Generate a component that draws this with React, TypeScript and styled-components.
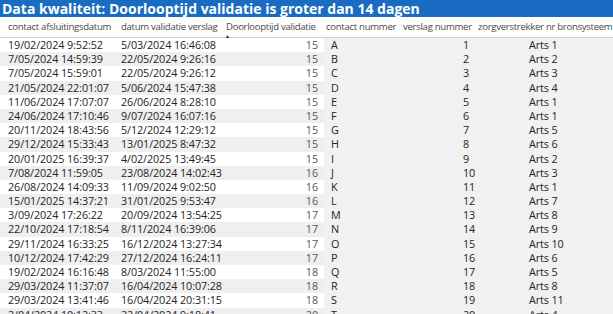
import React from "react";
import styled, { createGlobalStyle } from "styled-components";

const Global = createGlobalStyle`
  html, body {
    margin: 0;
    padding: 0;
    width: 613px;
    height: 314px;
    overflow: hidden;
    background: #ffffff;
    font-family: "Open Sans", "Noto Sans", Arial, sans-serif;
  }
`;

const Page = styled.div`
  width: 613px;
  height: 314px;
  overflow: hidden;
  display: flex;
  flex-direction: column;
`;

const TitleBar = styled.div`
  height: 17px;
  background: #1a6cc2;
  color: #ffffff;
  font-weight: 700;
  font-size: 14px;
  line-height: 17px;
  padding-left: 2px;
  white-space: nowrap;
`;

const COLS = "113px 109px 102px 74px 77px 1fr";

const HeaderRow = styled.div`
  display: grid;
  grid-template-columns: ${COLS};
  height: 23px;
  border-bottom: 1px solid #c9d3de;
  box-sizing: border-box;
`;

const HeaderCell = styled.div<{ $pl: number }>`
  position: relative;
  padding-left: ${(p) => p.$pl}px;
  font-size: 9.6px;
  letter-spacing: -0.3px;
  color: #4a4a4a;
  line-height: 20px;
  white-space: nowrap;
`;

const SortArrow = styled.span`
  position: absolute;
  left: 3px;
  top: 17px;
  font-size: 5px;
  line-height: 5px;
  color: #222;
`;

const Row = styled.div<{ $alt: boolean }>`
  display: grid;
  grid-template-columns: ${COLS};
  height: 14.2px;
  flex: none;
  background: ${(p) => (p.$alt ? "#efefef" : "#ffffff")};
`;

const Cell = styled.div<{ $pl?: number; $right?: boolean; $shade?: boolean; $muted?: boolean }>`
  padding-left: ${(p) => p.$pl ?? 0}px;
  padding-right: ${(p) => (p.$right ? 6 : 0)}px;
  text-align: ${(p) => (p.$right ? "right" : "left")};
  background: ${(p) => (p.$shade ? "#f1f1f1" : "transparent")};
  color: ${(p) => (p.$muted ? "#5e5454" : "#252423")};
  font-size: 10.8px;
  letter-spacing: -0.1px;
  line-height: 14.2px;
  white-space: nowrap;
  overflow: hidden;
`;

type R = [string, string, number, string, number, string];

const rows: R[] = [
  ["19/02/2024 9:52:52", "5/03/2024 16:46:08", 15, "A", 1, "Arts 1"],
  ["7/05/2024 14:59:39", "22/05/2024 9:26:16", 15, "B", 2, "Arts 2"],
  ["7/05/2024 15:59:01", "22/05/2024 9:26:12", 15, "C", 3, "Arts 3"],
  ["21/05/2024 22:01:07", "5/06/2024 15:47:38", 15, "D", 4, "Arts 4"],
  ["11/06/2024 17:07:07", "26/06/2024 8:28:10", 15, "E", 5, "Arts 1"],
  ["24/06/2024 17:10:46", "9/07/2024 16:07:16", 15, "F", 6, "Arts 1"],
  ["20/11/2024 18:43:56", "5/12/2024 12:29:12", 15, "G", 7, "Arts 5"],
  ["29/12/2024 15:33:43", "13/01/2025 8:47:32", 15, "H", 8, "Arts 6"],
  ["20/01/2025 16:39:37", "4/02/2025 13:49:45", 15, "I", 9, "Arts 2"],
  ["7/08/2024 11:59:05", "23/08/2024 14:02:43", 16, "J", 10, "Arts 3"],
  ["26/08/2024 14:09:33", "11/09/2024 9:02:50", 16, "K", 11, "Arts 1"],
  ["15/01/2025 14:37:21", "31/01/2025 9:53:47", 16, "L", 12, "Arts 7"],
  ["3/09/2024 17:26:22", "20/09/2024 13:54:25", 17, "M", 13, "Arts 8"],
  ["22/10/2024 17:18:54", "8/11/2024 16:39:06", 17, "N", 14, "Arts 9"],
  ["29/11/2024 16:33:25", "16/12/2024 13:27:34", 17, "O", 15, "Arts 10"],
  ["10/12/2024 17:42:29", "27/12/2024 16:24:11", 17, "P", 16, "Arts 6"],
  ["19/02/2024 16:16:48", "8/03/2024 11:55:00", 18, "Q", 17, "Arts 5"],
  ["29/03/2024 11:37:07", "16/04/2024 10:07:28", 18, "R", 18, "Arts 8"],
  ["29/03/2024 13:41:46", "16/04/2024 20:31:15", 18, "S", 19, "Arts 11"],
  ["2/04/2024 10:12:33", "22/04/2024 9:18:41", 20, "T", 20, "Arts 4"],
];

export default function App() {
  return (
    <Page>
      <Global />
      <TitleBar>Data kwaliteit: Doorlooptijd validatie is groter dan 14 dagen</TitleBar>
      <HeaderRow>
        <HeaderCell $pl={8}>contact afsluitingsdatum</HeaderCell>
        <HeaderCell $pl={8}>datum validatie verslag</HeaderCell>
        <HeaderCell $pl={4}>
          Doorlooptijd validatie
          <SortArrow>▲</SortArrow>
        </HeaderCell>
        <HeaderCell $pl={2}>contact nummer</HeaderCell>
        <HeaderCell $pl={5}>verslag nummer</HeaderCell>
        <HeaderCell $pl={3}>zorgverstrekker nr bronsysteem</HeaderCell>
      </HeaderRow>
      {rows.map((r, i) => (
        <Row key={i} $alt={i % 2 === 1}>
          <Cell $pl={8}>{r[0]}</Cell>
          <Cell $pl={8}>{r[1]}</Cell>
          <Cell $right $muted>{r[2]}</Cell>
          <Cell $pl={7} $shade>{r[3]}</Cell>
          <Cell $pl={65} $shade>{r[4]}</Cell>
          <Cell $pl={54} $shade>{r[5]}</Cell>
        </Row>
      ))}
    </Page>
  );
}
